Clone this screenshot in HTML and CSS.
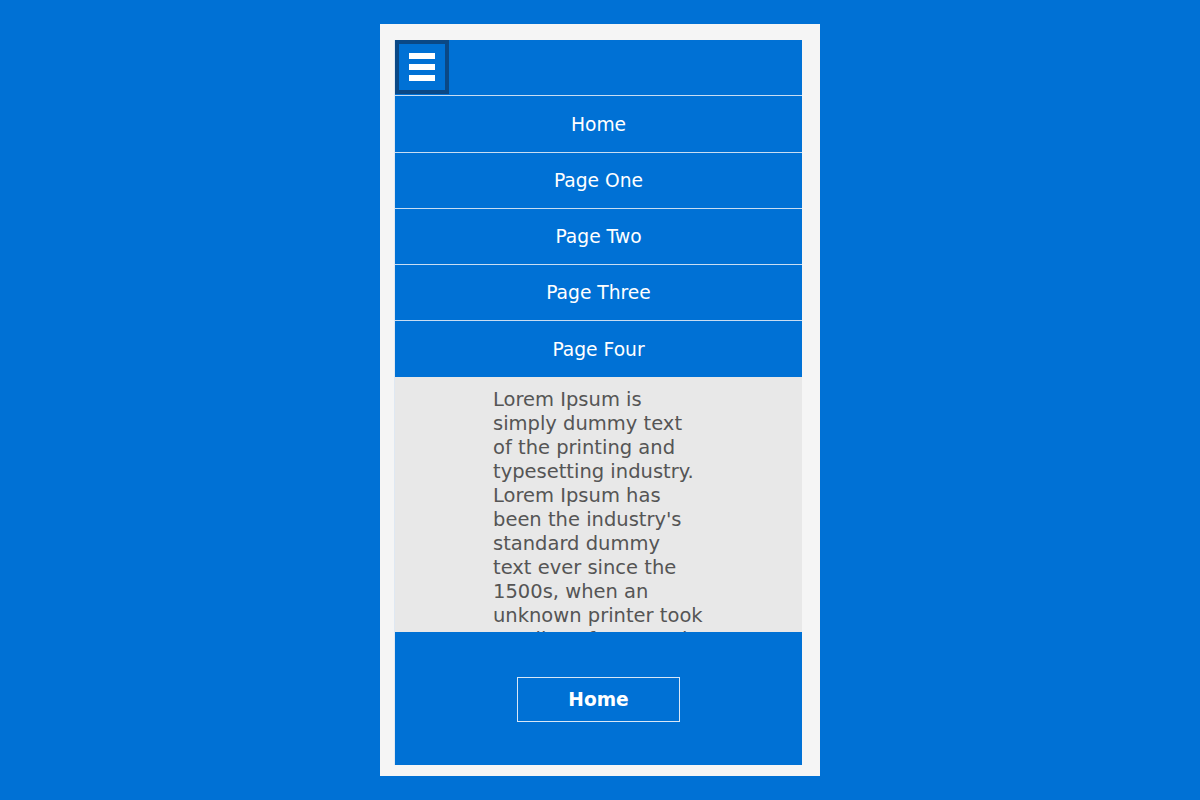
FILE: index.html
```html
<!DOCTYPE html>
<html lang="en">
<head>
    <meta charset="UTF-8">
    <title>Responsive Menu</title>
    <link rel="stylesheet" href="styles.css">
</head>
<body>
    <div class="device">
        <div class="screen">
            <!-- top bar with menu toggle -->
            <div class="topbar">
                <div class="toggle">
                    <span></span>
                    <span></span>
                    <span></span>
                </div>
            </div>

            <ul class="menu">
                <li>Home</li>
                <li>Page One</li>
                <li>Page Two</li>
                <li>Page Three</li>
                <li>Page Four</li>
            </ul>

            <div class="content">
                <p>Lorem Ipsum is simply dummy text of the printing and typesetting industry. Lorem Ipsum has been the industry's standard dummy text ever since the 1500s, when an unknown printer took a galley of type and scrambled it to make a type specimen book.</p>
            </div>

            <div class="footer">
                <div class="footer-btn">Home</div>
            </div>
        </div>
    </div>
</body>
</html>
```

FILE: styles.css
```css
body {
    margin: 0;
    padding-top: 24px;
    background-color: #0071d5;
    font-family: "DejaVu Sans", Verdana, sans-serif;
    height: 800px;
    box-sizing: border-box;
    overflow: hidden;
}
.device {
    width: 440px;
    margin: 0 auto;
    padding: 16px 18px 11px 14px;
    box-sizing: border-box;
    background-color: #f5f5f5;
}
.screen {
    width: 408px;
    height: 725px;
    background-color: #0071d5;
    display: flex;
    flex-direction: column;
    border-left: 1px solid #dfe8f2;
    box-sizing: border-box;
}
.topbar {
    height: 55px;
    flex-shrink: 0;
}
.toggle {
    width: 54px;
    height: 54px;
    box-sizing: border-box;
    border: 4px solid #0a4886;
    display: flex;
    flex-direction: column;
    align-items: center;
    justify-content: center;
    gap: 5px;
}
.toggle span {
    display: block;
    width: 26px;
    height: 6px;
    background-color: #fff;
}
.menu {
    list-style: none;
    margin: 0;
    padding: 0;
}
.menu li {
    height: 56px;
    box-sizing: border-box;
    border-top: 1px solid #c8ddf3;
    display: flex;
    align-items: center;
    justify-content: center;
    color: #fff;
    font-size: 18.7px;
}
.menu li:first-child {
    height: 57px;
}
.menu li:last-child {
    height: 57px;
}
.content {
    height: 255px;
    flex-shrink: 0;
    background-color: #e8e8e8;
    overflow: hidden;
    padding: 11px 0 0 98px;
    box-sizing: border-box;
}
.content p {
    margin: 0;
    width: 211px;
    font-size: 19.5px;
    line-height: 24px;
    color: #555;
}
.footer {
    flex: 1;
    display: flex;
    align-items: center;
    justify-content: center;
    padding-top: 2px;
}
.footer-btn {
    width: 163px;
    height: 45px;
    box-sizing: border-box;
    border: 1px solid #d8e7f7;
    color: #fff;
    font-weight: bold;
    font-size: 18.6px;
    display: flex;
    align-items: center;
    justify-content: center;
}
```
